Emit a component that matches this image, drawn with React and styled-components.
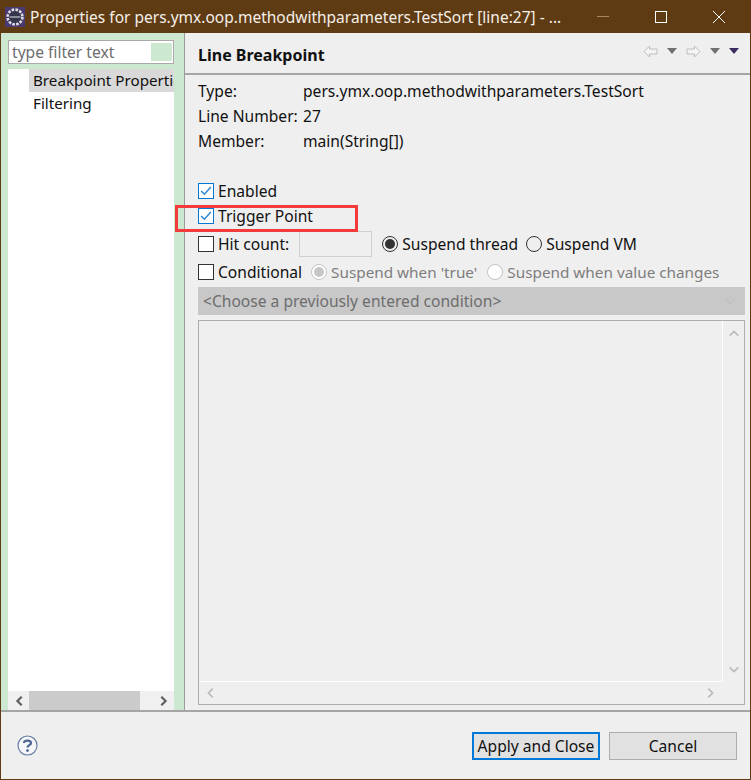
import React from "react";
import styled, { createGlobalStyle } from "styled-components";

const Global = createGlobalStyle`
html, body { margin: 0; padding: 0; background: #efefef; }
body { font-family: "Noto Sans", "Open Sans", sans-serif; font-size: 15.6px; color: #111; }
`;
const Win = styled.div`
position: relative;
width: 751px;
height: 780px;
box-sizing: border-box;
border: 1px solid #5f3b13;
border-top: 0;
display: flex;
flex-direction: column;
overflow: hidden;
`;
const TitleBar = styled.div`
height: 33px;
margin: 0 -1px;
flex: none;
background: #5f3b13;
color: #f4efe8;
display: flex;
align-items: center;
padding-left: 5px;
font-size: 15.5px;
white-space: nowrap;
`;
const TitleText = styled.span`
margin: 0 4px 0 5px;
width: 540px;
overflow: hidden;
`;
const WinBtn = styled.div`
width: 58px;
height: 33px;
flex: none;
display: flex;
align-items: center;
justify-content: center;
`;
const Body = styled.div`
flex: 1;
display: flex;
min-height: 0;
`;
const Sidebar = styled.div`
width: 184px;
flex: none;
box-sizing: border-box;
background: #cde8d0;
border-right: 1px solid #9b9b9b;
padding: 7px 10px 0 7px;
display: flex;
flex-direction: column;
`;
const Filter = styled.div`
height: 24px;
box-sizing: border-box;
border: 1px solid #aaa;
background: #fff;
padding: 2px 1px 2px 3px;
display: flex;
align-items: center;
justify-content: space-between;
color: #6d6d6d;
margin-bottom: 5px;
`;
const FilterClear = styled.div`
width: 21px;
height: 100%;
background: #cde8d0;
`;
const Tree = styled.div`
flex: 1;
background: #fff;
display: flex;
flex-direction: column;
overflow: hidden;
`;
const TreeRow = styled.div`
margin-left: 21px;
height: 23px;
line-height: 23px;
padding-left: 4px;
font-size: 15.2px;
white-space: nowrap;
overflow: hidden;
background: ${(p) => (p.$selected ? "#d9d9d9" : "transparent")};
`;
const HScroll = styled.div`
height: 19px;
flex: none;
background: #f0f0f0;
display: flex;
align-items: center;
margin-top: auto;
padding: 0 5px 0 6px;
`;
const ScrollThumb = styled.div`
width: 111px;
height: 19px;
background: #cbcbcb;
margin: 0 auto 0 3px;
`;
const Main = styled.div`
flex: 1;
display: flex;
flex-direction: column;
min-width: 0;
`;
const Header = styled.div`
height: 42px;
flex: none;
box-sizing: border-box;
border-bottom: 2px solid #a5a5a5;
display: flex;
align-items: center;
justify-content: space-between;
padding: 3px 11px 0 13px;
`;
const HeaderTitle = styled.div`
font-weight: 700;
font-size: 16px;
`;
const Nav = styled.div`
display: flex;
align-items: center;
gap: 9px;
margin-top: -7px;
`;
const Content = styled.div`
flex: 1;
padding: 4px 5px 5px 13px;
display: flex;
flex-direction: column;
min-height: 0;
`;
const Info = styled.div`
display: grid;
grid-template-columns: 105px 1fr;
grid-auto-rows: 25px;
line-height: 25px;
margin-bottom: 24px;
`;
const CheckRow = styled.label`
height: ${(p) => p.$h || 25}px;
display: flex;
align-items: center;
white-space: nowrap;
`;
const Box = styled.span`
width: 16px;
height: 16px;
flex: none;
box-sizing: border-box;
border: 1px solid ${(p) => (p.$on ? "#0078d7" : "#333")};
background: #fff;
margin-right: 4px;
display: flex;
align-items: center;
justify-content: center;
`;
const HitInput = styled.span`
width: 73px;
height: 26px;
box-sizing: border-box;
border: 1px solid #d0d0d0;
margin: 0 10px;
`;
const Radio = styled.span`
width: 16px;
height: 16px;
flex: none;
box-sizing: border-box;
border-radius: 50%;
border: 1px solid ${(p) => (p.$off ? "#c4c4c4" : "#333")};
background: ${(p) => (p.$off ? "#fff" : "transparent")};
margin-right: 4px;
display: flex;
align-items: center;
justify-content: center;
`;
const Dot = styled.span`
width: 10px;
height: 10px;
border-radius: 50%;
background: ${(p) => (p.$off ? "#c6c6c6" : "#333")};
`;
const RadioItem = styled.span`
display: flex;
align-items: center;
margin-left: ${(p) => p.$ml || 0}px;
color: ${(p) => (p.$off ? "#7d7d7d" : "inherit")};
font-size: ${(p) => (p.$off ? "15.3px" : "inherit")};
`;
const Combo = styled.div`
height: 28px;
flex: none;
box-sizing: border-box;
background: #c8c8c8;
color: #6d6d6d;
display: flex;
align-items: center;
justify-content: space-between;
padding: 0 9px 0 5px;
margin: 2px 0 5px;
`;
const Area = styled.div`
flex: 1;
box-sizing: border-box;
border: 1px solid #adadad;
display: grid;
grid-template-columns: 1fr 21px;
grid-template-rows: 1fr 22px;
`;
const AreaText = styled.div`
border-right: 1px solid #fff;
border-bottom: 1px solid #fff;
`;
const VBar = styled.div`
display: flex;
flex-direction: column;
align-items: center;
justify-content: space-between;
padding: 7px 0 7px;
`;
const HBar = styled.div`
display: flex;
align-items: center;
justify-content: space-between;
padding: 0 7px 0 6px;
`;
const Footer = styled.div`
height: 69px;
flex: none;
box-sizing: border-box;
border-top: 2px solid #a5a5a5;
display: flex;
align-items: center;
padding: 0 13px 0 16px;
`;
const Btn = styled.div`
width: ${(p) => p.$w}px;
height: 28px;
box-sizing: border-box;
background: #e1e1e1;
border: ${(p) => (p.$primary ? "2px solid #0078d7" : "1px solid #adadad")};
display: flex;
align-items: center;
justify-content: center;
margin-left: ${(p) => p.$ml || 0}px;
`;
const Highlight = styled.div`
position: absolute;
left: 174px;
top: 205px;
width: 183px;
height: 27px;
box-sizing: border-box;
border: 3px solid #f33b3b;
pointer-events: none;
`;

const Tick = () => (
  <svg width="14" height="14" viewBox="0 0 13 13">
    <path d="M2 6.5 L5 9.5 L11 2.8" fill="none" stroke="#2b88d8" strokeWidth="1.4" />
  </svg>
);
const Chevron = ({ dir, color = "#bbb", w = 2, size = 14 }) => {
  const d = {
    left: "M9 2 L4 7 L9 12",
    right: "M5 2 L10 7 L5 12",
    up: "M2 9 L7 4 L12 9",
    down: "M2 5 L7 10 L12 5",
  }[dir];
  return (
    <svg width={size} height={size} viewBox="0 0 14 14">
      <path d={d} fill="none" stroke={color} strokeWidth={w} />
    </svg>
  );
};
const Arrow = ({ flip }) => (
  <svg width="15" height="13" viewBox="0 0 15 13" style={flip ? { transform: "scaleX(-1)" } : undefined}>
    <path d="M1 6.5 L6.5 1 V4 H14 V9 H6.5 V12 Z" fill="#f4f4f4" stroke="#bdbdbd" />
  </svg>
);
const Caret = ({ color = "#707070" }) => (
  <svg width="10" height="6" viewBox="0 0 10 6">
    <path d="M0 0 H10 L5 6 Z" fill={color} />
  </svg>
);
const Gear = () => (
  <svg width="20" height="20" viewBox="0 0 20 20">
    <rect width="20" height="20" fill="#4b3a72" />
    <circle cx="10" cy="10" r="7.4" fill="#39335c" stroke="#dedede" strokeWidth="2.6" strokeDasharray="2.6 1.3" />
    <circle cx="10" cy="10" r="5.6" fill="#34344a" />
    <path d="M4.6 10 H15.4" stroke="#c9c9d4" strokeWidth="1.2" />
  </svg>
);
const Help = () => (
  <svg width="21" height="21" viewBox="0 0 21 21">
    <circle cx="10.5" cy="10.5" r="9.5" fill="#f4f6f9" stroke="#6a7fa3" strokeWidth="1.2" />
    <path d="M7 8 C7 4.8 14 4.8 14 8 C14 10.3 10.5 10 10.5 12.6" fill="none" stroke="#4e6590" strokeWidth="2.2" />
    <circle cx="10.5" cy="15.6" r="1.4" fill="#4e6590" />
  </svg>
);

export default function App() {
  return (
    <>
      <Global />
      <Win>
        <TitleBar>
          <Gear />
          <TitleText>Properties for pers.ymx.oop.methodwithparameters.TestSort [line:27] - ...</TitleText>
          <WinBtn>
            <svg width="12" height="1"><rect width="12" height="1" fill="#a8895f" /></svg>
          </WinBtn>
          <WinBtn>
            <svg width="12" height="12"><rect x=".5" y=".5" width="11" height="11" fill="none" stroke="#fff" /></svg>
          </WinBtn>
          <WinBtn>
            <svg width="12" height="12"><path d="M0 0 L12 12 M12 0 L0 12" stroke="#fff" /></svg>
          </WinBtn>
        </TitleBar>
        <Body>
          <Sidebar>
            <Filter>
              type filter text
              <FilterClear />
            </Filter>
            <Tree>
              <TreeRow $selected>Breakpoint Properties</TreeRow>
              <TreeRow>Filtering</TreeRow>
              <HScroll>
                <Chevron dir="left" color="#606060" w={2.6} size={12} />
                <ScrollThumb />
                <Chevron dir="right" color="#606060" w={2.6} size={12} />
              </HScroll>
            </Tree>
          </Sidebar>
          <Main>
            <Header>
              <HeaderTitle>Line Breakpoint</HeaderTitle>
              <Nav>
                <Arrow />
                <Caret />
                <Arrow flip />
                <Caret />
                <Caret color="#3c2a60" />
              </Nav>
            </Header>
            <Content>
              <Info>
                <span>Type:</span>
                <span>pers.ymx.oop.methodwithparameters.TestSort</span>
                <span>Line Number:</span>
                <span>27</span>
                <span>Member:</span>
                <span>main(String[])</span>
              </Info>
              <CheckRow>
                <Box $on><Tick /></Box>Enabled
              </CheckRow>
              <CheckRow>
                <Box $on><Tick /></Box>Trigger Point
              </CheckRow>
              <CheckRow $h={31}>
                <Box />Hit count:
                <HitInput />
                <RadioItem>
                  <Radio><Dot /></Radio>Suspend thread
                </RadioItem>
                <RadioItem $ml={8}>
                  <Radio />Suspend VM
                </RadioItem>
              </CheckRow>
              <CheckRow $h={26}>
                <Box />Conditional
                <RadioItem $off $ml={9}>
                  <Radio $off><Dot $off /></Radio>Suspend when 'true'
                </RadioItem>
                <RadioItem $off $ml={10}>
                  <Radio $off />Suspend when value changes
                </RadioItem>
              </CheckRow>
              <Combo>
                &lt;Choose a previously entered condition&gt;
                <Chevron dir="down" color="#b5b5b5" w={1} size={12} />
              </Combo>
              <Area>
                <AreaText />
                <VBar>
                  <Chevron dir="up" size={12} />
                  <Chevron dir="down" size={12} />
                </VBar>
                <HBar>
                  <Chevron dir="left" size={12} />
                  <Chevron dir="right" size={12} />
                </HBar>
              </Area>
            </Content>
          </Main>
        </Body>
        <Footer>
          <Help />
          <Btn $primary $w={128} $ml={434}>Apply and Close</Btn>
          <Btn $w={128} $ml={9}>Cancel</Btn>
        </Footer>
        <Highlight />
      </Win>
    </>
  );
}
